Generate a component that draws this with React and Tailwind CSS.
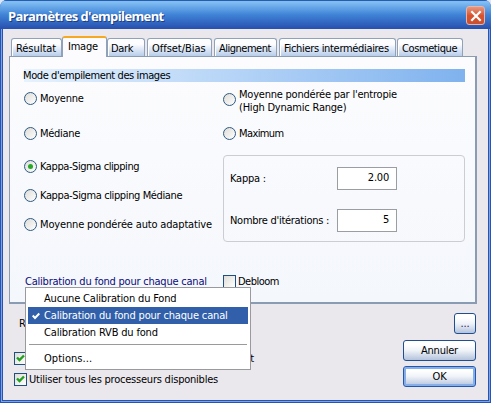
import React from 'react';

function Tab({ children, box }) {
  return (
    <div className={`h-[18px] shrink-0 rounded-t-[3px] border border-b-0 border-[#8fa2b8] bg-linear-to-b from-[#fdfdff] from-30% to-[#b7cdea] pt-[3px] leading-[13px] whitespace-nowrap shadow-[inset_1px_1px_0_#fff] ${box}`}>
      {children}
    </div>
  );
}

function Radio({ label, checked, className = '', text = '' }) {
  return (
    <div className={`flex h-[14px] items-center ${className}`}>
      <span className="flex size-[13px] shrink-0 items-center justify-center rounded-full border border-[#2c5a85] bg-linear-to-br from-[#dedcd6] to-white">
        {checked && <span className="size-[5px] rounded-full bg-[#27a827]" />}
      </span>
      <span className={`ml-[3px] whitespace-nowrap ${text}`}>{label}</span>
    </div>
  );
}

function CheckBox({ checked }) {
  return (
    <span className="flex size-[13px] shrink-0 items-center justify-center border border-[#1f5180] bg-linear-to-br from-[#dfddd7] to-white">
      {checked && (
        <svg width="9" height="9" viewBox="0 0 9 9">
          <path d="M1 3.5 3.5 6 8 1.5" fill="none" stroke="#21a121" strokeWidth="2.4" />
        </svg>
      )}
    </span>
  );
}

function Button({ children, className }) {
  return (
    <button className={`flex items-center justify-center rounded-[3px] border bg-linear-to-b from-white from-20% via-[#eff3f8] to-[#b4c3dc] leading-[13px] ${className}`}>
      {children}
    </button>
  );
}

export default function App() {
  return (
    <div className="relative flex h-[403px] w-[491px] flex-col overflow-hidden bg-[#dce6f8] font-['DejaVu_Sans_Condensed','DejaVu_Sans',sans-serif] text-[11px] leading-[13px] tracking-[-0.22px] text-black">
      <div className="flex h-full flex-col overflow-hidden rounded-t-[7px] bg-[#2754b4]">
        <header className="flex h-[29px] shrink-0 items-center justify-between border-t border-[#2a5cae] bg-linear-to-b from-[#7fbdf2] from-5% via-[#3f82d6] via-50% to-[#284fae] pr-[6px] pl-[8px]">
          <h1 className="mt-[3px] font-['Open_Sans',sans-serif] text-[13px] font-bold tracking-[-0.62px] whitespace-nowrap text-white [text-shadow:1px_1px_0_#1c3f83]">
            Paramètres d'empilement
          </h1>
          <button className="mt-[1px] flex size-[19px] items-center justify-center rounded-[3px] border border-[#e9b3a8] bg-linear-to-b from-[#e39880] via-[#d9532f] to-[#c9512f]">
            <svg width="12" height="12" viewBox="0 0 12 12">
              <path d="M1.3 1.3 10.7 10.7M10.7 1.3 1.3 10.7" stroke="#fff" strokeWidth="2.2" />
            </svg>
          </button>
        </header>

        <main className="mr-px mb-px ml-px flex flex-1 flex-col border-r border-b border-l border-[#7aa4e6]">
          <div className="flex flex-1 flex-col border-r border-b border-l border-[#2754b4] bg-[#ebe8ed]">
            <nav className="ml-[8px] flex h-[27px] items-end">
              <Tab box="w-[51px] pl-[4px] tracking-[-0.05px]">Résultat</Tab>
              <div className="z-10 -mb-px h-[21px] w-[45px] rounded-t-[3px] border-x border-t-2 border-x-[#8fa2b8] border-t-[#f6a821] bg-[#fcfcfe] pt-[2px] pl-[5px] leading-[13px]">Image</div>
              <Tab box="w-[38px] pl-[3px] tracking-[-0.3px]">Dark</Tab>
              <Tab box="ml-[2px] w-[65px] pl-[4px] tracking-[-0.03px]">Offset/Bias</Tab>
              <Tab box="ml-[2px] w-[63px] pl-[4px] tracking-[-0.5px]">Alignement</Tab>
              <Tab box="ml-[2px] w-[117px] pl-[4px] tracking-[-0.32px]">Fichiers intermédiaires</Tab>
              <Tab box="ml-px w-[66px] pl-[4px] tracking-[-0.4px]">Cosmetique</Tab>
            </nav>

            <section className="ml-[6px] h-[248px] w-[468px] shrink-0 border border-r-2 border-b-2 border-[#8a9cb4] bg-linear-to-b from-[#fcfcfe] to-[#f4f7fc] pt-[12px] pl-[14px]">
              <h2 className="h-[13px] w-[441px] bg-linear-to-r from-[#e6f2fd] to-[#7fb2ee] -indent-px tracking-[-0.4px]">Mode d'empilement des images</h2>
              <div className="flex">
                <div className="w-[199px]">
                  <Radio className="mt-[9px]" label="Moyenne" />
                  <Radio className="mt-[21px]" label="Médiane" text="tracking-[-0.3px]" />
                  <Radio className="mt-[19px]" label="Kappa-Sigma clipping" text="tracking-[-0.42px]" checked />
                  <Radio className="mt-[15px]" label="Kappa-Sigma clipping Médiane" text="tracking-[-0.38px]" />
                  <Radio className="mt-[15px]" label="Moyenne pondérée auto adaptative" text="tracking-[-0.16px]" />
                </div>
                <div>
                  <Radio className="mt-[10px]" text="mt-[4px]" label={<>Moyenne pondérée par l'entropie<br />(High Dynamic Range)</>} />
                  <Radio className="mt-[20px]" label="Maximum" text="tracking-[-0.6px]" />
                  <div className="mt-[15px] h-[87px] w-[242px] rounded-[4px] border border-[#cbcdd2] pt-[11px] pl-[6px]">
                    <div className="flex h-[23px] items-center">
                      <span className="w-[107px] whitespace-nowrap">Kappa :</span>
                      <span className="h-[23px] w-[60px] border border-[#9a9da2] bg-white pt-[3px] pr-[7px] text-right">2.00</span>
                    </div>
                    <div className="mt-[19px] flex h-[23px] items-center">
                      <span className="w-[107px] tracking-[-0.28px] whitespace-nowrap">Nombre d'itérations :</span>
                      <span className="h-[23px] w-[60px] border border-[#9a9da2] bg-white pt-[3px] pr-[7px] text-right">5</span>
                    </div>
                  </div>
                </div>
              </div>
              <div className="mt-[33px] flex h-[13px]">
                <span className="w-[199px] pl-px whitespace-nowrap text-[#0b0b78]">Calibration du fond pour chaque canal</span>
                <CheckBox />
                <span className="ml-[2px] tracking-[-0.5px]">Debloom</span>
              </div>
            </section>

            <footer className="flex justify-between pt-[9px] pr-[12px] pl-[11px]">
              <div className="w-[260px]">
                <div className="mt-[4px] ml-[5px] h-[13px]">R</div>
                <div className="mt-[22px] flex h-[13px] justify-between pr-[20px]">
                  <CheckBox checked />
                  <span>t</span>
                </div>
                <div className="mt-[8px] flex h-[13px] gap-[2px] whitespace-nowrap">
                  <CheckBox checked />
                  <span>Utiliser tous les processeurs disponibles</span>
                </div>
              </div>
              <div className="flex flex-col items-end">
                <Button className="h-[21px] w-[22px] border-[#1f4f91] text-[#3a0f55]">...</Button>
                <Button className="mt-[6px] h-[21px] w-[73px] border-[#1f4f91]">Annuler</Button>
                <Button className="mt-[5px] h-[21px] w-[73px] border-[#2356ad] shadow-[inset_0_0_0_2px_#86aee8]">OK</Button>
              </div>
            </footer>
          </div>
        </main>
      </div>

      <div className="absolute top-[287px] left-[25px] z-20 h-[83px] w-[226px] border border-[#9a9a9c] bg-white px-[2px] pt-[2px] tracking-[-0.17px]">
        <div className="h-[17px] pt-[2px] pl-[16px]">Aucune Calibration du Fond</div>
        <div className="flex h-[17px] items-center bg-[#315fa9] text-white">
          <svg className="mx-[4px]" width="8" height="8" viewBox="0 0 8 8">
            <path d="M.7 3.5 3 6 7.3 1.5" fill="none" stroke="#fff" strokeWidth="2" />
          </svg>
          <span>Calibration du fond pour chaque canal</span>
        </div>
        <div className="h-[17px] pt-[2px] pl-[16px]">Calibration RVB du fond</div>
        <div className="mx-px mt-[3px] h-px bg-[#9a9a9c]" />
        <div className="mt-[7px] pl-[16px] tracking-[0.05px]">Options...</div>
      </div>
    </div>
  );
}
